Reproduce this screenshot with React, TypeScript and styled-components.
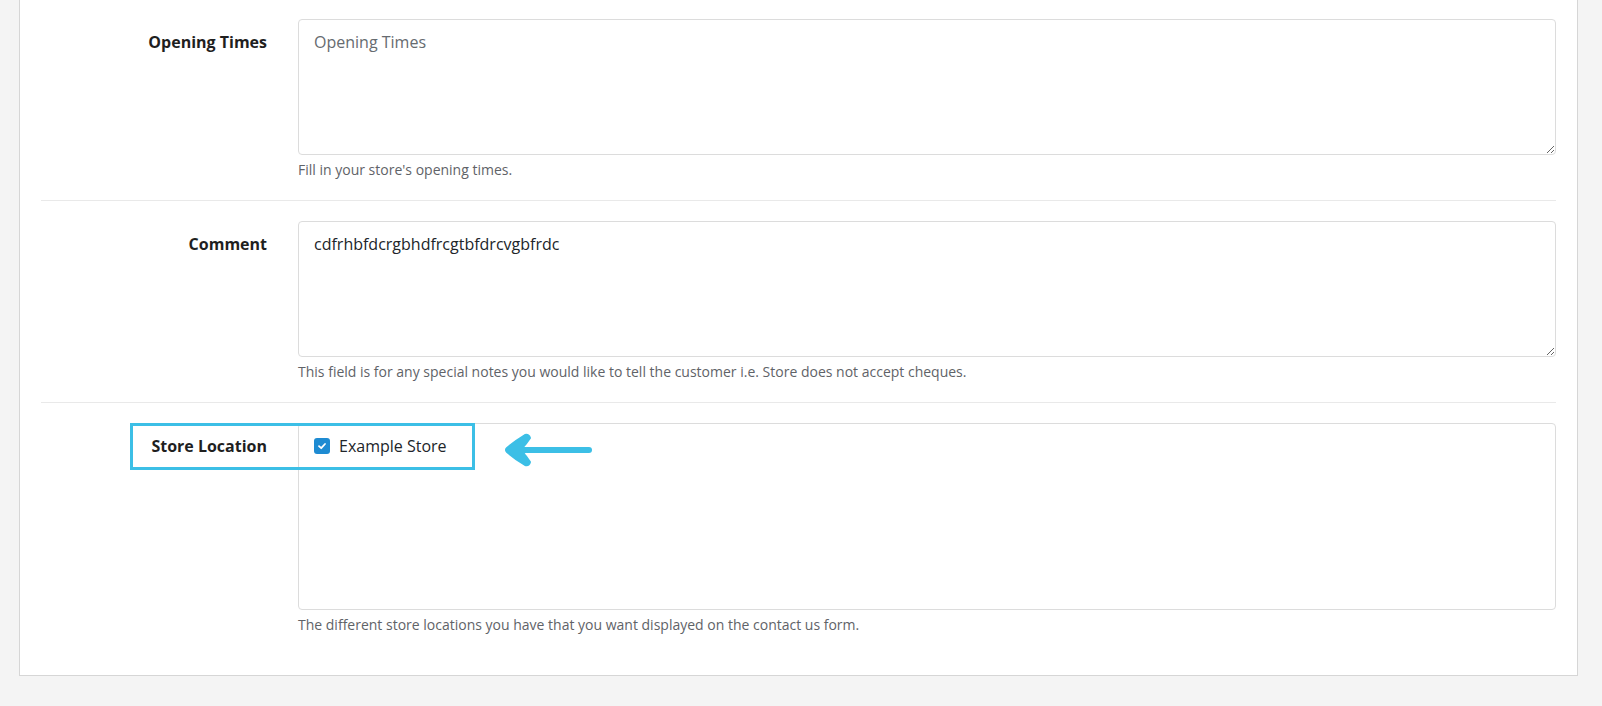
import React from "react";
import styled, { createGlobalStyle } from "styled-components";

const Global = createGlobalStyle`
  html, body { margin: 0; padding: 0; background: #f4f4f4; overflow: hidden; }
  body { font-family: "Open Sans", "Liberation Sans", sans-serif; color: #212529; }
  * { box-sizing: border-box; }
`;

const Page = styled.div`
  padding: 0 24px 0 19px;
  height: 706px;
`;

const Card = styled.div`
  margin-top: -2px;
  width: 1559px;
  background: #fff;
  border: 1px solid #d6d6d6;
  padding: 0 21px 20px 21px;
`;

const Row = styled.div<{ $last?: boolean }>`
  position: relative;
  display: grid;
  grid-template-columns: 226px 1fr;
  column-gap: 31px;
  padding: 20px 0;
  border-bottom: ${(p) => (p.$last ? "none" : "1px solid #e9e9e9")};
`;

const Label = styled.label`
  text-align: right;
  font-weight: 700;
  font-size: 16px;
  line-height: 22px;
  padding-top: 12px;
  color: #1f1f1f;
`;

const Control = styled.div`
  display: flex;
  flex-direction: column;
`;

const TextArea = styled.textarea`
  display: block;
  width: 100%;
  height: 136px;
  resize: vertical;
  border: 1px solid #dcdcdc;
  border-radius: 4px;
  padding: 11px 15px;
  font-family: "Open Sans", "Liberation Sans", sans-serif;
  font-size: 16px;
  line-height: 22px;
  color: #212529;
  background: #fff;
  outline: none;
  &::placeholder { color: #666b70; opacity: 1; }
`;

const Well = styled.div`
  height: 187px;
  border: 1px solid #dcdcdc;
  border-radius: 4px;
  padding: 11px 15px;
  overflow: auto;
`;

const CheckRow = styled.label`
  display: flex;
  align-items: center;
  gap: 9px;
  font-size: 16px;
  line-height: 22px;
  color: #212529;
`;

const Box = styled.span`
  width: 16px;
  height: 16px;
  border-radius: 3px;
  background: #1e8bd2;
  display: inline-flex;
  align-items: center;
  justify-content: center;
`;

const Help = styled.div`
  margin-top: 5px;
  font-size: 14px;
  line-height: 20px;
  color: #5f6368;
`;

const Highlight = styled.div`
  position: absolute;
  left: 89px;
  top: 20px;
  width: 345px;
  height: 47px;
  border: 3px solid #3cbfe6;
  pointer-events: none;
`;

const Arrow = styled.svg`
  position: absolute;
  left: 462px;
  top: 28px;
`;

export default function App() {
  return (
    <>
      <Global />
      <Page>
        <Card>
          <Row>
            <Label>Opening Times</Label>
            <Control>
              <TextArea placeholder="Opening Times" />
              <Help>Fill in your store's opening times.</Help>
            </Control>
          </Row>
          <Row>
            <Label>Comment</Label>
            <Control>
              <TextArea defaultValue="cdfrhbfdcrgbhdfrcgtbfdrcvgbfrdc" />
              <Help>
                This field is for any special notes you would like to tell the customer i.e. Store does not accept
                cheques.
              </Help>
            </Control>
          </Row>
          <Row $last>
            <Label>Store Location</Label>
            <Control>
              <Well>
                <CheckRow>
                  <Box>
                    <svg width="10" height="10" viewBox="0 0 10 10">
                      <path d="M2 5.2 L4.2 7.2 L8 3" fill="none" stroke="#fff" strokeWidth="1.8" strokeLinecap="round" strokeLinejoin="round" />
                    </svg>
                  </Box>
                  Example Store
                </CheckRow>
              </Well>
              <Help>The different store locations you have that you want displayed on the contact us form.</Help>
            </Control>
            <Highlight />
            <Arrow width="96" height="36" viewBox="0 0 96 36">
              <path d="M24 19 L86 19" stroke="#3cbfe6" strokeWidth="6" strokeLinecap="round" />
              <path
                d="M22 4 Q26 3 27 7 Q23 13 20 16 L27 19 L20 22 Q23 25 27 31 Q26 35 22 34 Q12 28 4 21 Q2 19 4 17 Q12 10 22 4 Z"
                fill="#3cbfe6"
                stroke="#3cbfe6"
                strokeWidth="2"
                strokeLinejoin="round"
              />
            </Arrow>
          </Row>
        </Card>
      </Page>
    </>
  );
}
